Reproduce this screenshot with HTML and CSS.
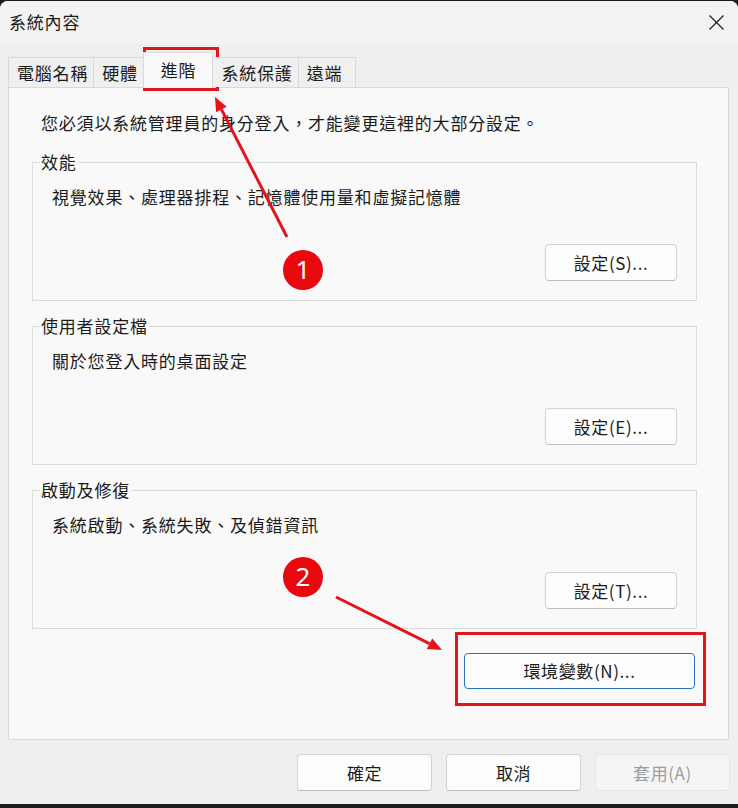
FILE: index.html
```html
<!DOCTYPE html>
<html lang="zh-Hant">
<head>
<meta charset="utf-8">
<title>系統內容</title>
<link rel="stylesheet" href="styles.css">
</head>
<body>
<div class="window">
  <div class="titlebar">
    <span class="title">系統內容</span>
    <span class="close" aria-label="關閉">
      <svg width="15" height="15" viewBox="0 0 15 15"><path d="M0.5 0.5 L14.5 14.5 M14.5 0.5 L0.5 14.5" stroke="#1a1a1a" stroke-width="1.2" fill="none"/></svg>
    </span>
  </div>
  <div class="tabs">
    <div class="tab">電腦名稱</div>
    <div class="tab">硬體</div>
    <div class="tab active">進階</div>
    <div class="tab">系統保護</div>
    <div class="tab tab-last">遠端</div>
  </div>
  <div class="panel">
    <p class="intro">您必須以系統管理員的身分登入，才能變更這裡的大部分設定。</p>
    <fieldset class="group">
      <legend>效能</legend>
      <p class="desc">視覺效果、處理器排程、記憶體使用量和虛擬記憶體</p>
      <div class="group-actions"><button class="btn">設定(S)...</button></div>
    </fieldset>
    <fieldset class="group">
      <legend>使用者設定檔</legend>
      <p class="desc">關於您登入時的桌面設定</p>
      <div class="group-actions"><button class="btn">設定(E)...</button></div>
    </fieldset>
    <fieldset class="group">
      <legend>啟動及修復</legend>
      <p class="desc">系統啟動、系統失敗、及偵錯資訊</p>
      <div class="group-actions"><button class="btn">設定(T)...</button></div>
    </fieldset>
    <div class="env-row"><button class="btn btn-default">環境變數(N)...</button></div>
  </div>
  <div class="footer">
    <button class="btn btn-footer">確定</button>
    <button class="btn btn-footer">取消</button>
    <button class="btn btn-footer btn-disabled">套用(A)</button>
  </div>
</div>
<svg class="annotations" width="738" height="808" viewBox="0 0 738 808">
  <rect x="144.5" y="48.5" width="73" height="41" fill="none" stroke="#e3151c" stroke-width="3"/>
  <rect x="456.5" y="633.5" width="248" height="71" fill="none" stroke="#e3151c" stroke-width="3"/>
  <line x1="287" y1="237" x2="221.4" y2="109.4" stroke="#e3151c" stroke-width="3"/>
  <polygon points="215,97 226.7,106.7 216.1,112.2" fill="#e3151c"/>
  <line x1="336" y1="597" x2="429.5" y2="643.7" stroke="#e3151c" stroke-width="3"/>
  <polygon points="442,650 426.8,649.1 432.2,638.4" fill="#e3151c"/>
  <circle cx="303" cy="270" r="20" fill="#e8080e"/>
  <text x="303" y="279" class="badge-num">1</text>
  <circle cx="303" cy="577" r="20" fill="#e8080e"/>
  <text x="303" y="586" class="badge-num">2</text>
</svg>
</body>
</html>
```
FILE: styles.css
```css
html, body {
  margin: 0;
  padding: 0;
}

body {
  background: #1c1c1c;
  font-family: "Noto Sans CJK TC", "Noto Sans", sans-serif;
  font-size: 17px;
  letter-spacing: 0.8px;
  color: #1b1b1b;
  width: 738px;
  height: 808px;
  overflow: hidden;
}

.window {
  width: 738px;
  height: 803px;
  margin-top: 1px;
  background: #efefef;
  border-radius: 8px 8px 0 0;
  overflow: hidden;
  display: flex;
  flex-direction: column;
}

.titlebar {
  height: 42px;
  flex: none;
  background: #f3f3f3;
  display: flex;
  align-items: center;
  justify-content: space-between;
  padding: 0 14px 0 9px;
}

.title {
  line-height: 24px;
}

.close {
  display: flex;
  width: 15px;
  height: 15px;
}

.tabs {
  display: flex;
  align-items: flex-end;
  height: 35px;
  margin-top: 9px;
  padding-left: 8px;
  flex: none;
  position: relative;
  z-index: 1;
}

.tab {
  height: 30px;
  box-sizing: border-box;
  padding: 0 5px 0 8px;
  border: 1px solid #dadada;
  border-bottom: none;
  margin-right: -1px;
  display: flex;
  align-items: center;
  background: #f0f0f0;
  line-height: 24px;
}

.tab.active {
  height: 36px;
  margin-bottom: -1px;
  padding: 0 16px 2px 17px;
  background: #f9f9f9;
  position: relative;
  z-index: 2;
}

.tab.tab-last {
  padding-right: 13px;
}

.panel {
  flex: none;
  height: 653px;
  box-sizing: border-box;
  margin: 0 9px 0 8px;
  border: 1px solid #d9d9d9;
  background: #f9f9f9;
  padding: 23px 0 0 23px;
}

.intro {
  margin: 0 0 0 9px;
  line-height: 24px;
}

.group {
  width: 665px;
  box-sizing: border-box;
  margin: 13px 0 0 0;
  border: 1px solid #dcdcdc;
  padding: 11px 19px 19px 19px;
  min-width: 0;
}

.intro + .group {
  margin-top: 15px;
}

.group legend {
  padding: 0 1px;
  margin-left: -12px;
  line-height: 24px;
}

.desc {
  margin: 0;
  line-height: 24px;
}

.group-actions {
  display: flex;
  justify-content: flex-end;
  margin-top: 35px;
}

.btn {
  font-family: inherit;
  font-size: 17px;
  letter-spacing: 0.6px;
  color: #1b1b1b;
  background: #fdfdfd;
  border: 1px solid #d3d3d3;
  border-bottom-color: #bdbdbd;
  border-radius: 4px;
  width: 132px;
  height: 37px;
  padding: 0;
  line-height: 24px;
}

.env-row {
  width: 663px;
  display: flex;
  justify-content: flex-end;
  margin-top: 24px;
}

.btn-default {
  width: 231px;
  height: 36px;
  border: 1px solid #2a72c3;
}

.footer {
  display: flex;
  justify-content: flex-end;
  gap: 14px;
  padding: 14px 8px 0 0;
}

.btn-footer {
  width: 135px;
  height: 37px;
}

.btn-disabled {
  background: #f5f5f5;
  border-color: #e6e6e6;
  color: #9d9d9d;
}

.annotations {
  position: absolute;
  left: 0;
  top: 0;
  pointer-events: none;
}

.badge-num {
  font-family: "Noto Sans", "Liberation Sans", sans-serif;
  font-size: 26px;
  fill: #ffffff;
  text-anchor: middle;
  letter-spacing: 0;
}
```
